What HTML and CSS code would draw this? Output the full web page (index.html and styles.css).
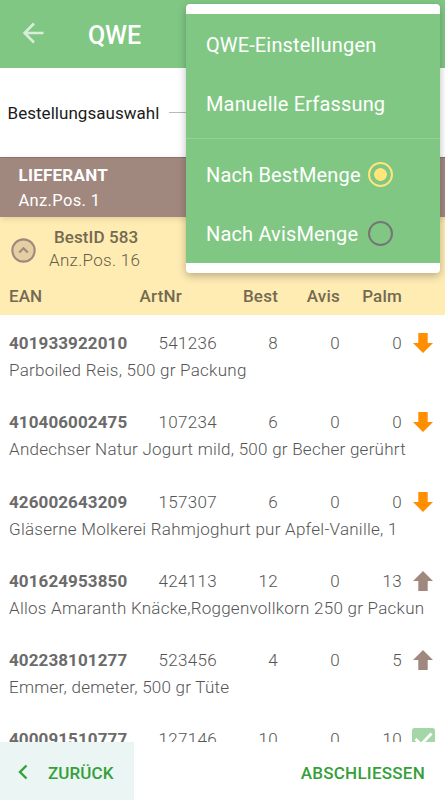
FILE: index.html
```html
<!DOCTYPE html>
<html lang="de">
<head>
<meta charset="utf-8">
<title>QWE</title>
<link rel="stylesheet" href="styles.css">
</head>
<body>
<div class="app">
  <header class="appbar">
    <svg class="back" viewBox="0 0 24 24"><path d="M13 2.5 3.5 12l9.500 9.500M3.500 12H22.500"/></svg>
    <h1 class="title">QWE</h1>
  </header>
  <section class="selection"><span>Bestellungsauswahl</span><i class="rule"></i></section>
  <section class="supplier">
    <strong>LIEFERANT</strong>
    <span>Anz.Pos. 1</span>
  </section>
  <section class="order">
    <div class="order-info">
      <svg class="collapse" viewBox="0 0 26 26"><circle cx="13" cy="13" r="11.600"/><path d="M8.500 15.200 13 10.700l4.500 4.500"/></svg>
      <div class="order-text"><strong>BestID 583</strong><span>Anz.Pos. 16</span></div>
    </div>
    <div class="columns head">
      <span class="ean">EAN</span><span>ArtNr</span><span>Best</span><span>Avis</span><span>Palm</span>
    </div>
  </section>
  <main class="list">
    <article class="item">
      <div class="columns"><b class="ean">401933922010</b><span>541236</span><span>8</span><span>0</span><span>0</span><svg class="arrow down" viewBox="0 0 20 20"><path d="M5.300 0h9.400v10H20L10 20 0 10h5.300z"/></svg></div>
      <p>Parboiled Reis, 500 gr Packung</p>
    </article>
    <article class="item">
      <div class="columns"><b class="ean">410406002475</b><span>107234</span><span>6</span><span>0</span><span>0</span><svg class="arrow down" viewBox="0 0 20 20"><path d="M5.300 0h9.400v10H20L10 20 0 10h5.300z"/></svg></div>
      <p>Andechser Natur Jogurt mild, 500 gr Becher gerührt</p>
    </article>
    <article class="item">
      <div class="columns"><b class="ean">426002643209</b><span>157307</span><span>6</span><span>0</span><span>0</span><svg class="arrow down" viewBox="0 0 20 20"><path d="M5.300 0h9.400v10H20L10 20 0 10h5.300z"/></svg></div>
      <p>Gläserne Molkerei Rahmjoghurt pur Apfel-Vanille, 1</p>
    </article>
    <article class="item">
      <div class="columns"><b class="ean">401624953850</b><span>424113</span><span>12</span><span>0</span><span>13</span><svg class="arrow up" viewBox="0 0 20 20"><path d="M5.300 20h9.400V10H20L10 0 0 10h5.300z"/></svg></div>
      <p>Allos Amaranth Knäcke,Roggenvollkorn 250 gr Packun</p>
    </article>
    <article class="item">
      <div class="columns"><b class="ean">402238101277</b><span>523456</span><span>4</span><span>0</span><span>5</span><svg class="arrow up" viewBox="0 0 20 20"><path d="M5.300 20h9.400V10H20L10 0 0 10h5.300z"/></svg></div>
      <p>Emmer, demeter, 500 gr Tüte</p>
    </article>
    <article class="item">
      <div class="columns"><b class="ean">400091510777</b><span>127146</span><span>10</span><span>0</span><span>10</span><svg class="check" viewBox="0 0 23 23"><rect width="23" height="23" rx="2.500"/><path d="m3.500 11 5.500 5.500L19.500 5.500"/></svg></div>
    </article>
  </main>
  <footer class="actions">
    <button class="prev"><svg viewBox="0 0 10 16"><path d="M8.500 1.500 2 8l6.500 6.500"/></svg><span>ZURÜCK</span></button>
    <button class="finish">ABSCHLIESSEN</button>
  </footer>
  <nav class="menu">
    <div class="menu-body">
      <div class="entry">QWE-Einstellungen</div>
      <div class="entry">Manuelle Erfassung</div>
      <div class="divider"></div>
      <div class="entry">Nach BestMenge<i class="dot on"></i></div>
      <div class="entry">Nach AvisMenge<i class="dot far"></i></div>
    </div>
  </nav>
</div>
</body>
</html>
```
FILE: styles.css
```css
* { box-sizing: border-box; }
body { margin: 0; background: #fff; font: 17px/20px Roboto, sans-serif; color: #6b6b6b; }
.app { position: relative; display: flex; flex-direction: column; width: 445px; height: 800px; overflow: hidden; }
svg { display: block; fill: none; }

.appbar { flex: 0 0 68px; display: flex; align-items: center; padding: 3px 0 0 21px; background: #81c784; }
.back { width: 24px; height: 24px; margin-top: -5px; stroke: #d9eeda; stroke-width: 2.5; }
.title { margin: 0 0 0 43px; color: #fff; font-size: 25px; font-weight: 500; line-height: 30px; }

.selection { flex: 0 0 89px; display: flex; align-items: center; padding: 0 0 0 7.500px; color: #1b1b1b; }
.selection span { letter-spacing: .04px; }
.rule { flex: 1; height: 1px; margin: 0 8px 0 10px; background: #bababa; }

.supplier { flex: 0 0 60px; display: flex; flex-direction: column; gap: 6px; padding: 7px 18.500px 0; color: #fff; background: #a1887f; border-top: 1px solid #8a736b; box-shadow: 0 2px 6px rgba(0,0,0,.12); z-index: 1; }
.supplier strong { font-weight: 700; letter-spacing: .25px; }
.supplier span { font-size: 16.500px; letter-spacing: .35px; }

.order { flex: 0 0 98px; background: #ffecb3; color: #736a51; }
.order-info { display: flex; height: 66px; padding: 10px 0 0 11px; }
.collapse { width: 25px; height: 25px; margin-top: 11px; stroke: #a1887f; stroke-width: 2.200; fill: #e3cfa2; }
.collapse path { fill: none; }
.order-text { display: flex; flex-direction: column; align-items: center; gap: 3px; margin-left: 13px; }
.order-text strong { margin-left: 3px; font-weight: 500; letter-spacing: .1px; }
.order-text span { letter-spacing: .3px; font-weight: 300; color: #665d45; }

.columns { display: grid; grid-template-columns: 121px 87px 61px 62px 62px 32px; padding-left: 9px; align-items: center; height: 24px; }
.columns span { text-align: right; letter-spacing: .2px; }
.columns .ean { text-align: left; letter-spacing: .1px; }
.head { height: 26px; font-weight: 500; }
.head span:nth-child(2) { margin-right: 35px; }

.list { flex: 1; min-height: 0; overflow: hidden; padding-top: 16px; font-weight: 300; }
.list b { font-weight: 700; }
.list span { color: #555; letter-spacing: .34px; }
.item { height: 79.300px; }
.item p { margin: 5px 0 0 9px; white-space: nowrap; letter-spacing: .25px; color: #555; }
.arrow { width: 20px; height: 20px; margin-left: 11px; }
.down { fill: #ff8f00; }
.up { fill: #a1887f; }
.check { width: 23px; height: 23px; margin-left: 10px; fill: #a5d6a7; }
.check path { fill: none; stroke: #fff; stroke-width: 2.800; }

.actions { flex: 0 0 58px; display: flex; justify-content: space-between; background: #fff; }
.actions button { border: 0; font: 500 17px/20px Roboto, sans-serif; color: #33a03a; background: transparent; padding: 4px 20px 0; }
.actions .finish { letter-spacing: .25px; }
.actions .prev { display: flex; align-items: center; gap: 20px; width: 134px; padding-left: 18px; background: #eaf5f4; letter-spacing: .1px; }
.prev svg { width: 10px; height: 16px; margin-top: -2px; stroke: #33a03a; stroke-width: 2.400; }

.menu { position: absolute; z-index: 2; top: 4px; left: 186px; width: 254px; height: 269px; padding: 10px 0; border-radius: 4px; background: #fff; box-shadow: 0 3px 9px rgba(0,0,0,.27); }
.menu-body { height: 249px; padding-top: 1px; color: #fff; background: #81c784; font-size: 20px; letter-spacing: .16px; }
.entry { display: flex; align-items: center; height: 59.500px; padding-left: 20px; white-space: nowrap; }
.divider { height: 1px; margin: 4px 0 6px; background: #96d099; }
.dot { width: 25px; height: 25px; margin: -1px 0 0 7px; border: 2.500px solid #757575; border-radius: 50%; }
.far { margin-left: 9.500px; }
.on { border-color: #ffe67a; background: radial-gradient(circle, #ffe67a 6px, transparent 6.700px); }
```
